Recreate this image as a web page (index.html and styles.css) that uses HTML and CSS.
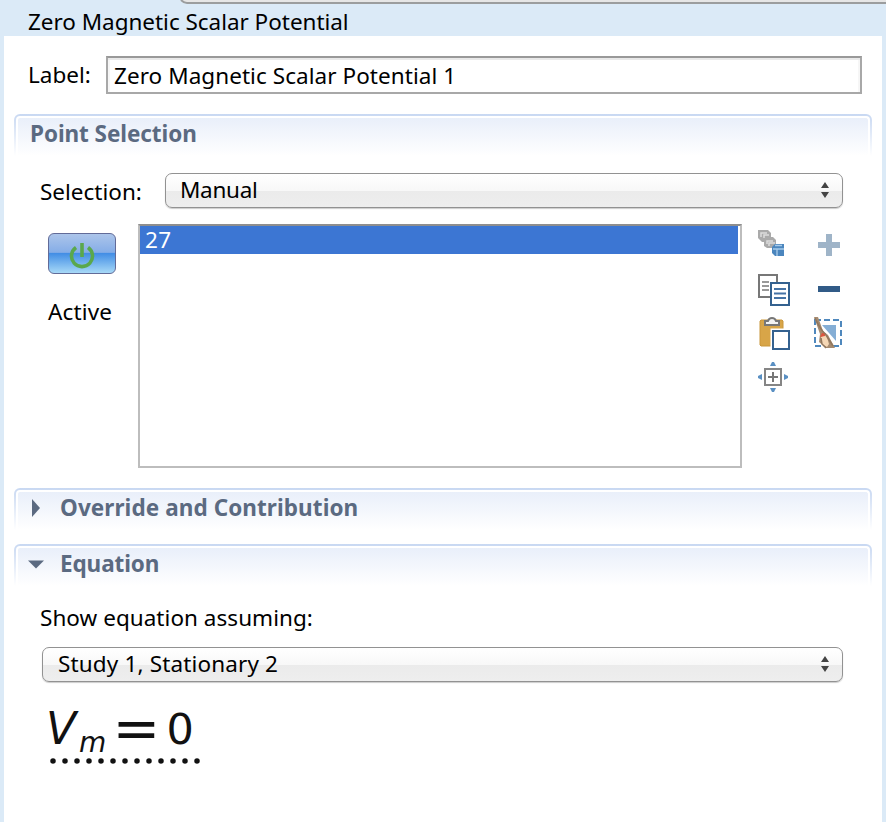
FILE: index.html
```html
<!DOCTYPE html>
<html lang="en">
<head>
<meta charset="utf-8">
<title>Zero Magnetic Scalar Potential</title>
<link rel="stylesheet" href="styles.css">
</head>
<body>
<header class="titlebar">
  <svg class="tab-edge" width="710" height="4" viewBox="0 0 710 4"><path d="M4 0H710V3H10Q6 3 5 0Z" fill="#e6e6e6"/><path d="M5 0Q8 3 11 3H710" fill="none" stroke="#9b9d9e" stroke-width="2"/></svg>
  <h1 class="title">Zero Magnetic Scalar Potential</h1>
</header>
<main class="panel">
  <div class="label-row">
    <span>Label:</span>
    <div class="input"><span class="t-input">Zero Magnetic Scalar Potential 1</span></div>
  </div>

  <section class="section points">
    <h2 class="head"><span class="t-points">Point Selection</span></h2>
    <div class="selection-row">
      <span>Selection:</span>
      <div class="select"><span class="t-manual">Manual</span>
        <svg width="10" height="18" viewBox="0 0 10 18"><path d="M1 7L5 1L9 7ZM1 11H9L5 17Z" fill="#444"/></svg></div>
    </div>
    <div class="entities">
      <div class="active-col">
        <button class="power" aria-label="Active"><svg width="28" height="28" viewBox="0 0 28 28" fill="none" stroke="#5aa84c" stroke-width="3.600"><path d="M8 5.500A10.500 10.500 0 1 0 20 5.500M14 1V15"/></svg></button>
        <span class="t-active">Active</span>
      </div>
      <div class="list"><div class="item"><span class="t-item">27</span></div></div>
      <div class="tools">
        <svg width="34" height="34" viewBox="0 0 34 34"><g fill="#aaa"><path d="M1 1H11L14 4V11L11 13H5L1 9Z"/><path d="M7 10L10 8H16L19 11V17L16 19H10L7 17Z"/></g><g fill="none" stroke="#ddd" stroke-width="1.500"><path d="M4 8V4H10M7 9V6H12M10 15V12H16M12 17V14H18"/></g><path d="M15 18L18 15H27V27H18L15 24Z" fill="#4b86be"/><path d="M16 20H27M20 20V27M18 16.500H25" fill="none" stroke="#a8cbea" stroke-width="1.300"/></svg>
        <svg width="34" height="34" viewBox="0 0 34 34"><path d="M12 5H18V13H26V19H18V27H12V19H4V13H12Z" fill="#9fb4c8"/></svg>
        <svg width="34" height="34" viewBox="0 0 34 34"><path d="M2 2H20V24H2Z" fill="#fff" stroke="#777" stroke-width="2"/><path d="M5 9H12M5 13H12M5 17H12" stroke="#999" stroke-width="2"/><path d="M14 10H32V32H14Z" fill="#fff" stroke="#34618f" stroke-width="2"/><path d="M17 16H29M17 20.500H29M17 25H29" stroke="#4673a5" stroke-width="2"/></svg>
        <svg width="34" height="34" viewBox="0 0 34 34"><path d="M4 13H26V19H4Z" fill="#315b87"/></svg>
        <svg width="34" height="34" viewBox="0 0 34 34"><path d="M4 3H25L26 4V28L25 29H4L3 28V4Z" fill="#d8a548" stroke="#c9963b"/><path d="M8 8V4H11Q12 1 15 1T19 4H22V8Z" fill="#f3f3f3" stroke="#777" stroke-width="2"/><path d="M16 14H32V32H16Z" fill="#fff" stroke="#fff" stroke-width="5"/><path d="M16 14H32V32H16Z" fill="#fff" stroke="#34618f" stroke-width="2"/></svg>
        <svg width="34" height="34" viewBox="0 0 34 34"><path d="M8 8H22V24Z" fill="#85aed5"/><path d="M1 3H27V29H1Z" fill="none" stroke="#4f88bd" stroke-width="2" stroke-dasharray="6 3"/><path d="M0 0H4L9 14L14 18L21 31H12L5 25L6 17Z" fill="#a68b70"/><path d="M7 20L12 17L15 27L13 30L8 27Z" fill="#f5d7b5"/><path d="M6 20L8 16H12L11 19Z" fill="#de563e"/><path d="M1 1Q6 12 12 18L19 29M7 21L8 27L12 31" fill="none" stroke="#91775e" stroke-width="1.500"/></svg>
        <svg class="zoom-extents" width="34" height="34" viewBox="0 0 34 34"><path d="M8 9H24V25H8Z" fill="#fff" stroke="#858585" stroke-width="2"/><path d="M11 17H21M16 12V22" stroke="#777" stroke-width="2"/><path d="M13 6L15 2H17L19 6ZM13 28H19L17 32H15ZM5 14V20L1 18V16ZM27 14L31 16V18L27 20Z" fill="#5a90c3"/></svg>
      </div>
    </div>
  </section>

  <section class="section override">
    <h2 class="head"><svg class="arrow" width="18" height="18" viewBox="0 0 18 18"><path d="M5 0L13 9L5 18Z"/></svg><span class="t-override">Override and Contribution</span></h2>
  </section>

  <section class="section">
    <h2 class="head"><svg class="arrow" width="18" height="18" viewBox="0 0 18 18"><path d="M1 5.500H17L9 13.500Z"/></svg><span class="t-equation">Equation</span></h2>
    <div class="equation-body">
      <span class="t-show">Show equation assuming:</span>
      <div class="select"><span class="t-study">Study 1, Stationary 2</span>
        <svg width="10" height="18" viewBox="0 0 10 18"><path d="M1 7L5 1L9 7ZM1 11H9L5 17Z" fill="#444"/></svg></div>
      <svg class="formula" width="170" height="84" viewBox="40 686 170 84">
        <text class="math italic" x="46" y="744" font-size="44">V</text>
        <text class="math italic" x="79" y="752" font-size="28">m</text>
        <text class="math" x="112.500" y="748" font-size="57">=</text>
        <text class="math" x="166.500" y="744" font-size="43">0</text>
        <path d="M53 761H197.500" fill="none" stroke="#111" stroke-width="5.500" stroke-linecap="round" stroke-dasharray="0 12"/>
      </svg>
    </div>
  </section>
</main>
</body>
</html>
```
FILE: styles.css
```css
* { box-sizing: border-box; }
body {
  margin: 0;
  height: 822px;
  padding: 0 4px;
  background: #dbeaf7;
  color: #000;
  font: 22.5px/30px "Noto Sans", sans-serif;
  overflow: hidden;
}
svg { display: block; flex: none; overflow: visible; }
span, h1 { white-space: nowrap; }
.titlebar { height: 36px; }
.tab-edge { margin-left: 172px; overflow: hidden; }
.title { margin: 3px 0 0 24px; font-size: inherit; font-weight: 400; letter-spacing: -0.03px; }
.panel { height: 786px; padding: 20px 10px 0; background: #fff; }
.label-row { display: flex; align-items: center; height: 38px; padding: 0 10px 0 14px; }
.label-row > span { width: 78px; margin-top: -1px; }
.input {
  flex: 1;
  height: 38px;
  padding: 3px 6px;
  border: 2px solid #a8a8a8;
  border-top-color: #999;
  box-shadow: inset 0 2px #e9e9e9, inset 2px 0 #f6f6f6, inset -2px 0 #f6f6f6;
}
.t-input { letter-spacing: 0.06px; }
.section { height: 278px; }
.points { height: 374px; margin-top: 20px; }
.override { height: 56px; }
.head {
  position: relative;
  display: flex;
  height: 42px;
  margin: 0;
  padding: 5px 16px 0;
  border-radius: 6px 6px 0 0;
  background: linear-gradient(#c8d8f2, #fff);
  color: #5b6a81;
  font-size: 22.5px;
  font-weight: 700;
}
.head::before {
  content: "";
  position: absolute;
  inset: 2px 2px 0;
  border: 2px solid #fff;
  border-bottom: 0;
  border-radius: 4px 4px 0 0;
  background: linear-gradient(#e9effa, #fff);
}
.head > * { position: relative; }
.arrow { margin: 6px 15px 0 -3px; fill: #5b6a81; }
.t-points { letter-spacing: -0.07px; }
.t-override { letter-spacing: 0.08px; }
.t-equation { letter-spacing: -0.1px; }
.selection-row { display: flex; height: 35px; margin: 17px 29px 0 26px; }
.selection-row > span { width: 125px; margin-top: 4px; }
.select {
  display: flex;
  flex: 1;
  justify-content: space-between;
  height: 35px;
  padding: 1px 12px 0 14px;
  border: 1.500px solid #929292;
  border-radius: 7px;
  background: linear-gradient(#fff, #f8f8f8 50%, #ebebeb 51%, #eee);
  box-shadow: 0 1px 1px #ccc;
}
.select svg { margin-top: 6px; }
.t-manual { letter-spacing: -0.3px; }
.entities { display: flex; height: 244px; margin-top: 16px; }
.active-col { display: flex; flex-direction: column; width: 124px; padding: 9px 0 0 34px; }
.power {
  display: flex;
  justify-content: center;
  width: 68px;
  height: 41px;
  padding: 8px 0 0;
  border: 1.500px solid #626b98;
  border-radius: 6px;
  background: linear-gradient(#acc5ea, #85ade7 47%, #438ee5 50%, #a7d9f7);
}
.active-col > span { margin-top: 23px; letter-spacing: 0.15px; }
.list { width: 604px; padding: 0 2px 0 0; border: 2px solid #bdbdbd; border-top-color: #8e8e8e; }
.item { height: 28px; padding-left: 5px; background: #3c76d3; color: #fff; line-height: 28px; letter-spacing: 0.5px; }
.tools {
  display: grid;
  grid-template-columns: 34px 34px;
  grid-auto-rows: 34px;
  gap: 10px 23px;
  margin: 5px 0 0 15px;
}
.zoom-extents { margin-top: -1px; }
.equation-body { display: flex; flex-direction: column; padding: 17px 29px 0 26px; }
.equation-body .select { flex: none; margin: 14px 0 0 2px; }
.t-show { letter-spacing: 0.04px; }
.t-study { margin-left: 1px; letter-spacing: 0.15px; }
.formula { margin-top: 4px; }
.math { font-family: "DejaVu Sans", sans-serif; fill: #111; }
.italic { font-style: italic; }
```
